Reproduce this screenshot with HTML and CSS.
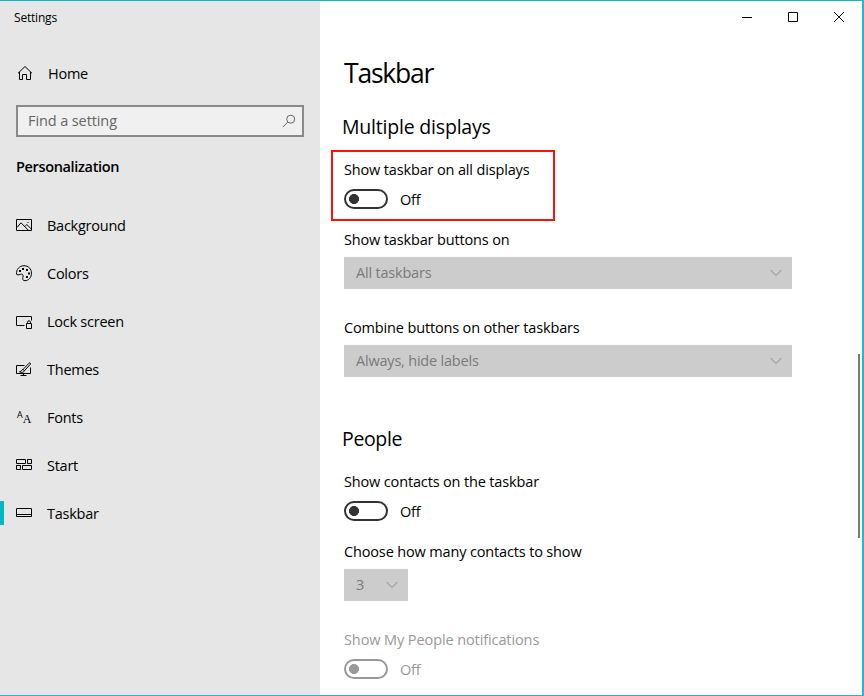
FILE: index.html
```html
<!DOCTYPE html>
<html lang="en">
<head>
    <meta charset="UTF-8">
    <meta name="viewport" content="width=device-width, initial-scale=1.0">
    <title>Settings</title>
    <link rel="stylesheet" href="styles.css">
</head>
<body>
    <div class="window">
        <aside class="sidebar">
            <div class="app-title">Settings</div>
            <a class="nav-item home">
                <svg class="icon" width="18" height="18" viewBox="0 0 18 18"><path d="M2 9.3 9 2.5l7 6.8M3.5 8v7.5h3v-5h4v5h4V8"/></svg>
                <span class="nav-text">Home</span>
            </a>
            <div class="search">
                <span>Find a setting</span>
                <svg class="icon" width="14" height="14" viewBox="0 0 14 14"><circle cx="8.7" cy="5.2" r="4"/><path d="M5.8 8.1.8 13.1"/></svg>
            </div>
            <h3 class="category">Personalization</h3>
            <nav class="nav">
                <a class="nav-item">
                    <svg class="icon" width="18" height="18" viewBox="0 0 18 18"><path d="M1.5 2.5h15v11h-15zM2 10.5l4-4.700 7.300 7.400M9.800 9.500l2-2 4.500 4.500"/><path d="M12.500 5.500h1"/></svg>
                    <span class="nav-text">Background</span>
                </a>
                <a class="nav-item">
                    <svg class="icon" width="18" height="18" viewBox="0 0 18 18"><path d="M1.600 9.300C.9 4.500 4.500.7 9 .7c4.300 0 7.500 3.200 7.500 7.400 0 4.500-3 7.600-6.500 7.600-2.300 0-2.600-1.500-2.100-3.200.5-1.700.2-3.400-1.500-3.400-1.700 0-2.900 1.800-4.800.2z"/><path class="dots" d="M4 5h2v2H4zM7 3h2v2H7zM11 4h2v2h-2zM13 7.500h2v2h-2zM11 11h2v2h-2z"/></svg>
                    <span class="nav-text">Colors</span>
                </a>
                <a class="nav-item">
                    <svg class="icon" width="18" height="18" viewBox="0 0 18 18"><path d="M9.500 12.500h-8v-9h15V7.500M11.500 10.500h5v5h-5zM12.500 10.500V9.300a1.500 1.500 0 0 1 3 0v1.200"/></svg>
                    <span class="nav-text">Lock screen</span>
                </a>
                <a class="nav-item">
                    <svg class="icon" width="18" height="18" viewBox="0 0 18 18"><path d="M9.500 4.500h-8v8h14V6.500M8.500 12.500v2M5.500 14.500h6M8 8.500l6-6.300c1-.8 1.900.1 1.300 1.100l-5.700 6.300zM8 8.500c-2 .2-1.700 2.200-3.500 2.300 2 1 4.500.7 5-1.100"/></svg>
                    <span class="nav-text">Themes</span>
                </a>
                <a class="nav-item">
                    <span class="icon font-icon"><b>A</b><i>A</i></span>
                    <span class="nav-text">Fonts</span>
                </a>
                <a class="nav-item">
                    <svg class="icon" width="18" height="18" viewBox="0 0 18 18"><path d="M1.500 2.500h9v4h-9zM12.500 2.500h4v4h-4zM1.500 8.500h4v4h-4zM7.500 8.500h9v4h-9z"/></svg>
                    <span class="nav-text">Start</span>
                </a>
                <a class="nav-item active">
                    <svg class="icon" width="18" height="18" viewBox="0 0 18 18"><path d="M1.500 3.500h15v8h-15zM1.500 9.500h15"/></svg>
                    <span class="nav-text">Taskbar</span>
                </a>
            </nav>
        </aside>
        <main class="main">
            <div class="caption">
                <svg class="icon" width="10" height="10" viewBox="0 0 10 10"><path d="M0 5.500h10"/></svg>
                <svg class="icon" width="10" height="10" viewBox="0 0 10 10"><path d="M.5.5h9v9h-9z"/></svg>
                <svg class="icon" width="10" height="10" viewBox="0 0 10 10"><path d="M0 0l10 10M10 0 0 10"/></svg>
            </div>
            <div class="content">
                <h1>Taskbar</h1>
                <h2>Multiple displays</h2>
                <div class="highlight">
                    <p class="label">Show taskbar on all displays</p>
                    <div class="toggle-row"><span class="toggle"></span><span class="state">Off</span></div>
                </div>
                <p class="label first">Show taskbar buttons on</p>
                <div class="select">
                    <span>All taskbars</span>
                    <svg class="icon" width="12" height="8" viewBox="0 0 12 8"><path d="M.5 1 6 6.500 11.500 1"/></svg>
                </div>
                <p class="label spaced">Combine buttons on other taskbars</p>
                <div class="select">
                    <span>Always, hide labels</span>
                    <svg class="icon" width="12" height="8" viewBox="0 0 12 8"><path d="M.5 1 6 6.500 11.500 1"/></svg>
                </div>
                <h2 class="people">People</h2>
                <p class="label contacts">Show contacts on the taskbar</p>
                <div class="toggle-row"><span class="toggle"></span><span class="state">Off</span></div>
                <p class="label count">Choose how many contacts to show</p>
                <div class="select small">
                    <span>3</span>
                    <svg class="icon" width="12" height="8" viewBox="0 0 12 8"><path d="M.5 1 6 6.500 11.500 1"/></svg>
                </div>
                <div class="disabled">
                    <p class="label spaced">Show My People notifications</p>
                    <div class="toggle-row"><span class="toggle"></span><span class="state">Off</span></div>
                </div>
            </div>
            <div class="scrollbar"></div>
        </main>
    </div>
</body>
</html>
```
FILE: styles.css
```css
* {
    box-sizing: border-box;
}

body {
    margin: 0;
    font-family: "Open Sans", "Noto Sans", sans-serif;
    font-size: 14.5px;
    letter-spacing: -0.2px;
    line-height: 20px;
    color: #000;
}

h1, h2, h3, p {
    margin: 0;
    font-weight: 400;
}

.window {
    display: flex;
    height: 696px;
    border-top: 1px solid #14b5c3;
    border-right: 2px solid #1cbcc9;
    border-bottom: 1px solid #2fb3bd;
    background: #fff;
    overflow: hidden;
}

.icon {
    flex: none;
    fill: none;
    stroke: #000;
    stroke-width: 1;
}

.sidebar {
    width: 320px;
    background: #e6e6e6;
}

.app-title {
    height: 34px;
    padding-left: 14px;
    font-size: 12px;
    line-height: 34px;
    letter-spacing: -0.2px;
}

.nav-item {
    display: flex;
    align-items: center;
    gap: 14px;
    height: 48px;
    padding-left: 15px;
}

.nav .icon {
    margin-top: 2px;
}

.nav-text,
.state {
    padding-top: 2px;
}

.nav-text {
    letter-spacing: -0.25px;
}

.home {
    margin-top: 14px;
    padding-left: 16px;
}

.search {
    display: flex;
    align-items: center;
    justify-content: space-between;
    width: 288px;
    height: 32px;
    margin: 8px 16px 0;
    padding: 0 6px 0 10px;
    border: 2px solid #8a8a8a;
    background: #f0f0f0;
    color: #666;
    letter-spacing: -0.1px;
}

.search .icon {
    stroke: #666;
}

.category {
    margin: 20px 0 24px 16px;
    font-size: 14.5px;
    font-weight: 600;
    letter-spacing: -0.35px;
}

.dots {
    fill: #000;
    stroke: none;
}

.font-icon {
    display: flex;
    width: 18px;
    height: 18px;
    padding: 0 0 0 2px;
    line-height: 12px;
    letter-spacing: 0;
}

.font-icon b {
    font-size: 9px;
    font-weight: 400;
}

.font-icon i {
    padding-top: 4px;
    font-family: "Liberation Serif", serif;
    font-size: 12px;
    font-style: normal;
}

.active {
    background: linear-gradient(#00b7c3, #00b7c3) 0 12px / 4px 24px no-repeat;
}

.main {
    position: relative;
    flex: 1;
}

.caption {
    display: flex;
    justify-content: flex-end;
    gap: 36px;
    height: 32px;
    padding: 11px 18px 0 0;
}

.content {
    padding: 20px 0 0 24px;
}

h1 {
    font-size: 26.5px;
    line-height: 40px;
    letter-spacing: -1.2px;
}

h2 {
    margin: 20px 0 0 -2px;
    font-size: 19.5px;
    line-height: 28px;
}

.label {
    letter-spacing: -0.15px;
}

.highlight {
    width: 224px;
    height: 71px;
    margin: 9px 0 0 -13px;
    padding: 8px 0 0 11px;
    border: 2px solid #fb1508;
}

.toggle-row {
    display: flex;
    align-items: center;
    gap: 12px;
    height: 20px;
    margin-top: 9px;
}

.toggle {
    width: 44px;
    height: 20px;
    border: 2px solid #333;
    border-radius: 10px;
    background: radial-gradient(circle at 8px 8px, #333 4.7px, transparent 5.3px);
}

.first {
    margin-top: 9px;
}

.spaced {
    margin-top: 29px;
}

.people {
    margin-top: 48px;
    letter-spacing: -0.35px;
}

.contacts {
    margin-top: 19px;
}

.count {
    margin-top: 21px;
}

.select {
    display: flex;
    align-items: center;
    justify-content: space-between;
    width: 448px;
    height: 32px;
    margin-top: 7px;
    padding: 0 10px 0 12px;
    background: #ccc;
    color: #7a7a7a;
}

.select .icon {
    stroke: #8a8a8a;
}

.small {
    width: 64px;
}

.disabled {
    color: #999;
}

.disabled .label {
    letter-spacing: -0.1px;
}

.disabled .toggle {
    border-color: #999;
    background: radial-gradient(circle at 8px 8px, #999 4.7px, transparent 5.3px);
}

.scrollbar {
    position: absolute;
    top: 353px;
    right: 2px;
    width: 2px;
    height: 184px;
    background: #7a7a7a;
}
```
